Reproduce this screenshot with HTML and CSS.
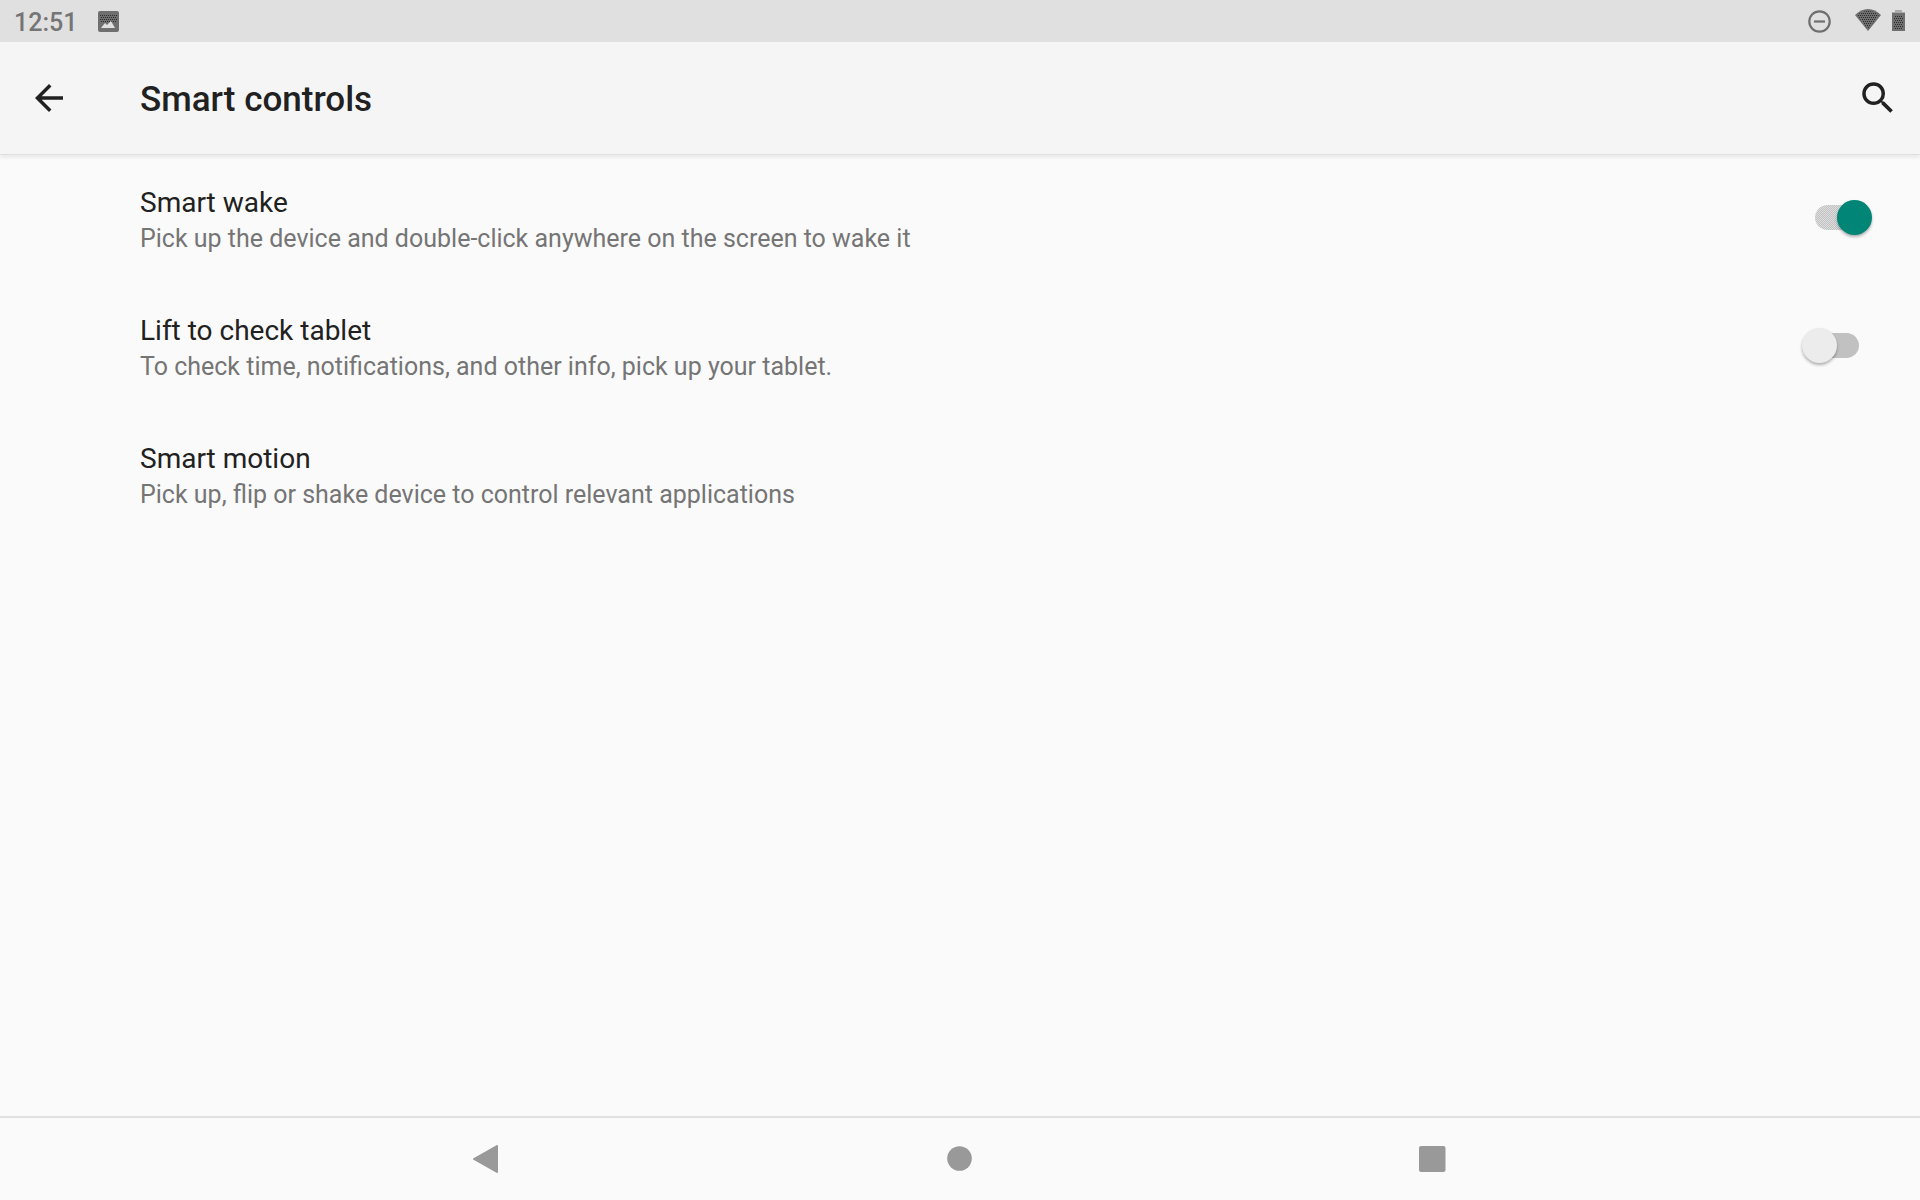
FILE: index.html
```html
<!DOCTYPE html>
<html lang="en">
<head>
<meta charset="utf-8">
<meta name="viewport" content="width=device-width, initial-scale=1">
<title>Smart controls</title>
<link rel="stylesheet" href="styles.css">
</head>
<body>
<div class="status-bar">
  <div class="status-group">
    <time class="clock">12:51</time>
    <svg class="status-icon" width="21" height="21" viewBox="0 0 21 21" aria-hidden="true">
      <defs>
        <pattern id="dots" width="2" height="4" patternUnits="userSpaceOnUse">
          <rect width="1" height="1" fill="#2c2c2c"/>
          <rect x="1" y="2" width="1" height="1" fill="#2c2c2c"/>
        </pattern>
      </defs>
      <rect width="21" height="21" rx="2" fill="#6f6f6f"/>
      <rect x="2" y="3" width="17" height="8" fill="url(#dots)"/>
      <path d="M3 17l4-5 2 2 4-4 4 7z" fill="#e0e0e0"/>
    </svg>
  </div>
  <div class="status-group">
    <svg class="dnd" width="23" height="23" viewBox="0 0 23 23" aria-hidden="true">
      <circle cx="11.5" cy="11.5" r="10.2" fill="none" stroke="#6f6f6f" stroke-width="2.2"/>
      <path d="M6 11.5h11" stroke="#6f6f6f" stroke-width="2.2"/>
    </svg>
    <svg class="wifi" width="26" height="22" viewBox="0 0 26 22" aria-hidden="true">
      <path d="M13 22L0 6Q6 0 13 0T26 6z" fill="#6f6f6f"/>
      <path d="M13 20L2 6Q7 2 13 2T24 6z" fill="url(#dots)"/>
    </svg>
    <svg class="battery" width="13" height="21" viewBox="0 0 13 21" aria-hidden="true">
      <path d="M3 0h7v2h3v2H0V2h3z" fill="#aaa"/>
      <path d="M0 3h13v18H0z" fill="#6f6f6f"/>
      <path d="M2 5h9v14H2z" fill="url(#dots)"/>
    </svg>
  </div>
</div>
<header class="app-bar">
  <button class="icon-button" type="button" aria-label="Navigate up">
    <svg width="42" height="42" viewBox="0 0 24 24" aria-hidden="true"><path d="M20 11H7.830l5.590-5.590L12 4l-8 8 8 8 1.410-1.410L7.830 13H20v-2z" fill="#212121"/></svg>
  </button>
  <h1 class="title">Smart controls</h1>
  <button class="icon-button" type="button" aria-label="Search">
    <svg width="42" height="42" viewBox="0 0 24 24" aria-hidden="true"><path d="M15.500 14h-.79l-.28-.27A6.471 6.471 0 0 0 16 9.500 6.500 6.500 0 1 0 9.500 16c1.610 0 3.090-.59 4.230-1.570l.27.28v.79l5 4.990L20.490 19l-4.990-5zm-6 0C7.010 14 5 11.990 5 9.500S7.010 5 9.500 5 14 7.010 14 9.500 11.990 14 9.500 14z" fill="#212121"/></svg>
  </button>
</header>
<main class="settings">
  <label class="row">
    <span class="text">
      <span class="name">Smart wake</span>
      <span class="summary">Pick up the device and double-click anywhere on the screen to wake it</span>
    </span>
    <input class="switch" type="checkbox" role="switch" checked>
  </label>
  <label class="row">
    <span class="text">
      <span class="name">Lift to check tablet</span>
      <span class="summary">To check time, notifications, and other info, pick up your tablet.</span>
    </span>
    <input class="switch" type="checkbox" role="switch">
  </label>
  <a class="row" href="#smart-motion">
    <span class="text">
      <span class="name">Smart motion</span>
      <span class="summary">Pick up, flip or shake device to control relevant applications</span>
    </span>
  </a>
</main>
<nav class="nav-bar" aria-label="System">
  <button class="nav-button" type="button" aria-label="Back">
    <svg width="28" height="28" viewBox="0 0 28 28" aria-hidden="true"><path d="M1 14L24 1v26z" fill="#999" stroke="#999" stroke-width="2" stroke-linejoin="round"/></svg>
  </button>
  <button class="nav-button" type="button" aria-label="Home">
    <svg width="28" height="28" viewBox="0 0 28 28" aria-hidden="true"><circle cx="13.500" cy="13.500" r="12.300" fill="#999"/></svg>
  </button>
  <button class="nav-button" type="button" aria-label="Recent apps">
    <svg width="28" height="28" viewBox="0 0 28 28" aria-hidden="true"><rect x="0" y="1" width="26.500" height="26" rx="2" fill="#999"/></svg>
  </button>
</nav>
</body>
</html>
```
FILE: styles.css
```css
* {
  box-sizing: border-box;
}

body {
  display: flex;
  flex-direction: column;
  min-height: 100vh;
  margin: 0;
  background: #fafafa;
  color: #212121;
  font-family: Roboto, "Noto Sans", sans-serif;
}

button {
  display: flex;
  align-items: center;
  justify-content: center;
  padding: 0;
  border: 0;
  background: none;
}

.status-bar {
  display: flex;
  justify-content: space-between;
  height: 42px;
  padding: 1px 15px 0 14px;
  background: #e0e0e0;
}

.status-group {
  display: flex;
  align-items: center;
}

.clock {
  margin-right: 21px;
  padding-top: 3px;
  color: #757575;
  font-size: 25px;
  font-weight: 500;
  line-height: 30px;
}

.dnd {
  margin: 0 24px 1px 0;
}

.wifi {
  margin: 0 11px 3px 0;
}

.battery {
  margin-bottom: 2px;
}

.app-bar {
  display: flex;
  align-items: center;
  height: 112px;
  padding: 0 21px 0 28px;
  background: #f5f5f5;
  box-shadow: 0 1px 0 #e0e0e0, 0 4px 3px rgba(0, 0, 0, 0.06);
}

.icon-button {
  width: 42px;
  height: 42px;
}

.title {
  flex: 1;
  margin: 0 0 0 70px;
  padding-top: 4px;
  font-size: 35px;
  font-weight: 500;
  line-height: 42px;
}

.settings {
  flex: 1;
}

.row {
  display: flex;
  align-items: center;
  justify-content: space-between;
  min-height: 128px;
  padding: 0 48px 0 140px;
  color: inherit;
  text-decoration: none;
}

.text {
  display: flex;
  flex-direction: column;
  padding-top: 6px;
}

.name {
  font-size: 28px;
  line-height: 36px;
}

.summary {
  color: #757575;
  font-size: 25px;
  line-height: 36px;
}

.switch {
  position: relative;
  width: 70px;
  height: 36px;
  margin: 0;
  appearance: none;
}

.switch::before {
  content: "";
  position: absolute;
  top: 5px;
  left: 13px;
  width: 44px;
  height: 25px;
  border-radius: 13px;
  background: #c1c1c1;
}

.switch::after {
  content: "";
  position: absolute;
  top: 0;
  left: 0;
  width: 35px;
  height: 35px;
  border-radius: 50%;
  background: #ececec;
  box-shadow: 0 2px 3px rgba(0, 0, 0, 0.3);
}

.switch:checked::before {
  background: repeating-conic-gradient(#c1c1c1 0 25%, #dedede 0 50%) 0 0 / 2px 2px;
}

.switch:checked::after {
  left: 35px;
  background: #008577;
}

.nav-bar {
  display: flex;
  align-items: center;
  justify-content: space-evenly;
  height: 84px;
  padding: 0 28px;
  border-top: 2px solid #e0e0e0;
}

.nav-button {
  width: 28px;
  height: 80px;
}
```
